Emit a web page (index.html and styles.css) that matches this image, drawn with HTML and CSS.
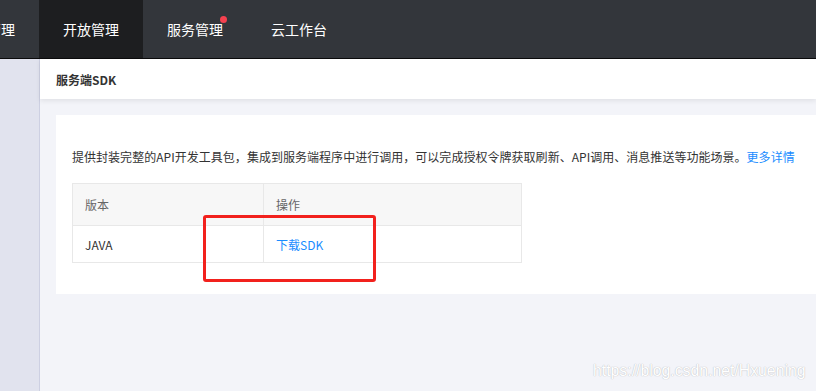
FILE: index.html
```html
<!DOCTYPE html>
<html lang="zh-CN">
<head>
<meta charset="utf-8">
<title>服务端SDK</title>
<link rel="stylesheet" href="styles.css">
</head>
<body>
<header class="topbar">
  <nav class="nav">
    <a class="nav-item nav-first">应用管理</a>
    <a class="nav-item active">开放管理</a>
    <a class="nav-item"><span class="dot-wrap">服务管理<span class="dot"></span></span></a>
    <a class="nav-item">云工作台</a>
  </nav>
</header>
<div class="layout">
  <aside class="sidebar"></aside>
  <main class="main">
    <div class="page-head">服务端SDK</div>
    <div class="content">
      <section class="card">
        <p class="desc">提供封装完整的API开发工具包，集成到服务端程序中进行调用，可以完成授权令牌获取刷新、API调用、消息推送等功能场景。<a class="link">更多详情</a></p>
        <table class="sdk-table">
          <thead>
            <tr><th class="col1">版本</th><th class="col2">操作</th></tr>
          </thead>
          <tbody>
            <tr><td>JAVA</td><td><a class="link">下载SDK</a></td></tr>
          </tbody>
        </table>
      </section>
    </div>
  </main>
</div>
<div class="highlight"></div>
<div class="watermark">https://blog.csdn.net/Hxuening</div>
</body>
</html>
```
FILE: styles.css
```css
* { box-sizing: border-box; }
html, body { margin: 0; padding: 0; }
body {
  width: 816px;
  height: 391px;
  overflow: hidden;
  font-family: "Noto Sans CJK SC", "Liberation Sans", sans-serif;
  background: #f3f4f9;
  color: #333;
  position: relative;
}
.topbar {
  height: 59px;
  background: #33363b;
  border-bottom: 1px solid #0b0b0c;
  overflow: hidden;
}
.nav { display: flex; height: 58px; }
.nav-item {
  display: flex;
  align-items: center;
  height: 58px;
  padding: 0 24px;
  font-size: 14px;
  color: #fff;
  flex-shrink: 0;
}
.nav-first { margin-left: -65px; }
.nav-item.active { background: #1d1e20; }
.dot-wrap { position: relative; }
.dot {
  position: absolute;
  right: -4px;
  top: -3px;
  width: 7px;
  height: 7px;
  border-radius: 50%;
  background: #f5414f;
}
.layout { display: flex; height: 332px; }
.sidebar {
  width: 40px;
  background: #e1e3ee;
  border-right: 1px solid #cdd0e2;
  flex-shrink: 0;
}
.main { flex: 1; display: flex; flex-direction: column; }
.page-head {
  height: 40px;
  background: #fff;
  padding-left: 16px;
  display: flex;
  align-items: center;
  font-size: 12px;
  font-weight: bold;
  color: #333;
  box-shadow: 0 2px 5px rgba(0, 0, 0, 0.08);
  position: relative;
  z-index: 1;
}
.content { padding: 16px 0 0 16px; }
.card {
  background: #fff;
  padding: 32px 16px 0 16px;
  height: 179px;
}
.desc {
  margin: 0 0 16px 0;
  font-size: 12px;
  line-height: 20px;
  color: #333;
  white-space: nowrap;
  letter-spacing: 0.03px;
}
.link { color: #1a8cff; }
.sdk-table {
  border-collapse: collapse;
  font-size: 12px;
  width: 450px;
}
.sdk-table th, .sdk-table td {
  border: 1px solid #e8e8e8;
  text-align: left;
  padding: 0 12px;
  font-weight: normal;
}
.sdk-table th {
  background: #f7f7f7;
  color: #666;
  height: 42px;
}
.sdk-table td { height: 37px; color: #333; }
.col1 { width: 191px; }
.highlight {
  position: absolute;
  left: 203px;
  top: 215px;
  width: 173px;
  height: 67px;
  border: 3px solid #f2211d;
  border-radius: 3px;
}
.watermark {
  position: absolute;
  left: 593px;
  top: 362px;
  font-family: "Liberation Sans", Arial, sans-serif;
  font-size: 15.8px;
  white-space: nowrap;
  color: #ffffff;
  text-shadow: 0 0 1px #b8b8bc, 0 0 1px #d0d0d4;
}
```
